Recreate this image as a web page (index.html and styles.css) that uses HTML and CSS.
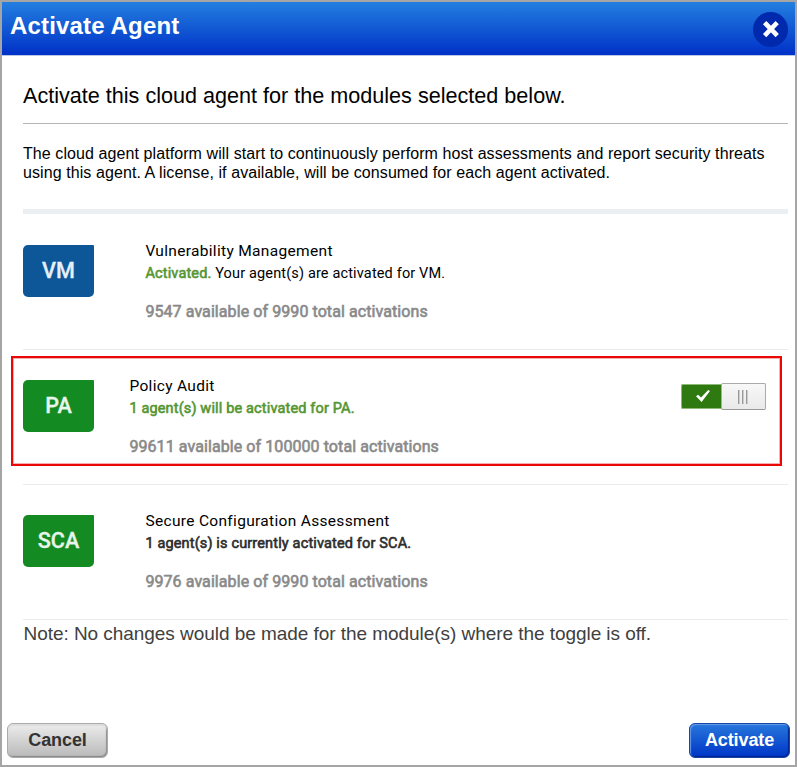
FILE: index.html
```html
<!DOCTYPE html>
<html lang="en">
<head>
<meta charset="utf-8">
<title>Activate Agent</title>
<link rel="stylesheet" href="styles.css">
</head>
<body>
<div class="dialog">
  <header class="titlebar">
    <h1>Activate Agent</h1>
    <button class="close" aria-label="Close">
      <svg width="35" height="35" viewBox="0 0 35 35"><circle cx="17.5" cy="17.5" r="17.5" fill="#0029ad"/><path d="M13.2 12.2 22.6 21.9M22.6 12.2 13.2 21.9" stroke="#fff" stroke-width="4.6" stroke-linecap="square"/></svg>
    </button>
  </header>
  <main class="content">
    <h2>Activate this cloud agent for the modules selected below.</h2>
    <p class="intro">The cloud agent platform will start to continuously perform host assessments and report security threats<br>using this agent. A license, if available, will be consumed for each agent activated.</p>
    <section class="module">
      <div class="badge vm">VM</div>
      <div class="info">
        <div class="name">Vulnerability Management</div>
        <div class="status"><span class="on">Activated.</span> <span>Your agent(s) are activated for VM.</span></div>
        <div class="count">9547 available of 9990 total activations</div>
      </div>
    </section>
    <section class="module selected">
      <div class="badge">PA</div>
      <div class="info">
        <div class="name">Policy Audit</div>
        <div class="status"><span class="on">1 agent(s) will be activated for PA.</span></div>
        <div class="count">99611 available of 100000 total activations</div>
      </div>
      <div class="toggle">
        <div class="track"><svg width="14" height="12" viewBox="0 0 14 12"><path d="M0 6.3 2.2 4.7 5 7.5 12.2 0 14 1 5.6 12Z" fill="#fff"/></svg></div>
        <div class="knob"><i></i><i></i><i></i></div>
      </div>
      <div class="highlight"></div>
    </section>
    <section class="module">
      <div class="badge">SCA</div>
      <div class="info">
        <div class="name">Secure Configuration Assessment</div>
        <div class="status"><span class="dark">1 agent(s) is currently activated for SCA.</span></div>
        <div class="count">9976 available of 9990 total activations</div>
      </div>
    </section>
    <p class="note">Note: No changes would be made for the module(s) where the toggle is off.</p>
  </main>
  <footer class="actions">
    <button class="btn cancel">Cancel</button>
    <button class="btn primary">Activate</button>
  </footer>
</div>
</body>
</html>
```

FILE: styles.css
```css
* { box-sizing: border-box; }
body { margin: 0; background: #fff; font-family: "Liberation Sans", Arial, sans-serif; color: #000; }
h1, h2, p { margin: 0; font-weight: normal; }
button { font-family: inherit; cursor: pointer; }
.dialog { width: 797px; height: 767px; border: 2px solid #a5a5a5; display: flex; flex-direction: column; overflow: hidden; }
.titlebar { height: 54px; flex: none; display: flex; justify-content: space-between; align-items: flex-start; padding: 10px 7px 0 8px; background: linear-gradient(#237fdf, #0031c8); border-bottom: 1px solid #b9c6e4; }
h1 { font-size: 24px; line-height: 28px; font-weight: bold; color: #fff; letter-spacing: .16px; }
.close { width: 35px; height: 35px; padding: 0; border: 0; background: none; }
.close svg { display: block; }
.content { flex: 1; padding: 0 7px 0 21px; }
h2 { height: 68px; padding-top: 27px; font-size: 21.6px; line-height: 26px; border-bottom: 1px solid #b5b5b5; white-space: nowrap; }
.intro { height: 90px; padding-top: 20px; font-size: 16px; line-height: 19px; letter-spacing: .085px; border-bottom: 5px solid #eceff1; white-space: nowrap; }
.module { position: relative; display: flex; height: 135px; padding-top: 30px; border-bottom: 1px solid #ebebeb; font-family: Roboto, sans-serif; white-space: nowrap; }
.intro + .module { height: 136px; padding-top: 31px; }
.module.selected .badge { margin-right: 35px; }
.badge { width: 71px; height: 52px; margin-right: 51px; border-radius: 5px 1px 5px 5px; background: #138b22; color: #e8f5ea; font-size: 21.6px; font-weight: 500; line-height: 51px; text-align: center; -webkit-text-stroke: .3px currentColor; }
.badge.vm { background: #0d5798; color: #e6eff8; }
.info { flex: 1; margin-top: -5px; padding-left: .4px; }
.name { font-size: 15.5px; line-height: 22px; letter-spacing: .32px; }
.status { padding-top: 1px; font-size: 14.5px; line-height: 22px; letter-spacing: .15px; }
.on, .dark, .count { -webkit-text-stroke: .6px currentColor; }
.on { color: #559633; }
.dark { color: #2d2d2d; }
.count { margin-top: 16px; font-size: 16px; line-height: 22px; letter-spacing: .08px; color: #898989; }
.toggle { display: flex; width: 85px; height: 27px; margin: 3px 22px 0 0; align-items: center; }
.track { width: 41px; height: 25px; display: flex; align-items: center; justify-content: center; background: #2e7a10; border: 1px solid #8db878; border-right: 0; border-radius: 2px 0 0 2px; }
.track svg { margin-left: 2px; margin-top: -2px; }
.knob { width: 45px; height: 27px; margin-left: -1px; padding-right: 3px; display: flex; align-items: center; justify-content: center; gap: 3px; background: linear-gradient(#f8f8f8, #e9e9e9); border: 1px solid #aaa; border-bottom-color: #999; border-radius: 2px; }
.knob i { width: 1px; height: 14px; background: #999; box-shadow: 1px 0 #ccc; }
.highlight { position: absolute; left: -12px; top: 6px; width: 771px; height: 110px; border: 2px solid #e80808; box-shadow: inset 0 0 0 1px #f4b0b0; pointer-events: none; }
.note { padding-top: 3px; font-size: 19px; line-height: 22px; letter-spacing: -.05px; text-indent: .5px; color: #404040; white-space: nowrap; }
.actions { display: flex; flex: none; justify-content: space-between; padding: 0 5px 7px; }
.btn { height: 35px; width: 101px; padding: 0; border-radius: 6px; font-size: 18px; letter-spacing: -.1px; font-weight: bold; }
.cancel { color: #333; background: linear-gradient(#ececec, #b9b9b9); border: 1px solid #aaa; box-shadow: inset 0 2px 1px #ddd, inset -1px -1px 1px #888; }
.primary { color: #fff; background: linear-gradient(#2777db, #0035c8); border: 1px solid #1745a5; box-shadow: inset 1px 1px 1px #6a9de8, inset -1px -1px 1px #00258c; }
```
